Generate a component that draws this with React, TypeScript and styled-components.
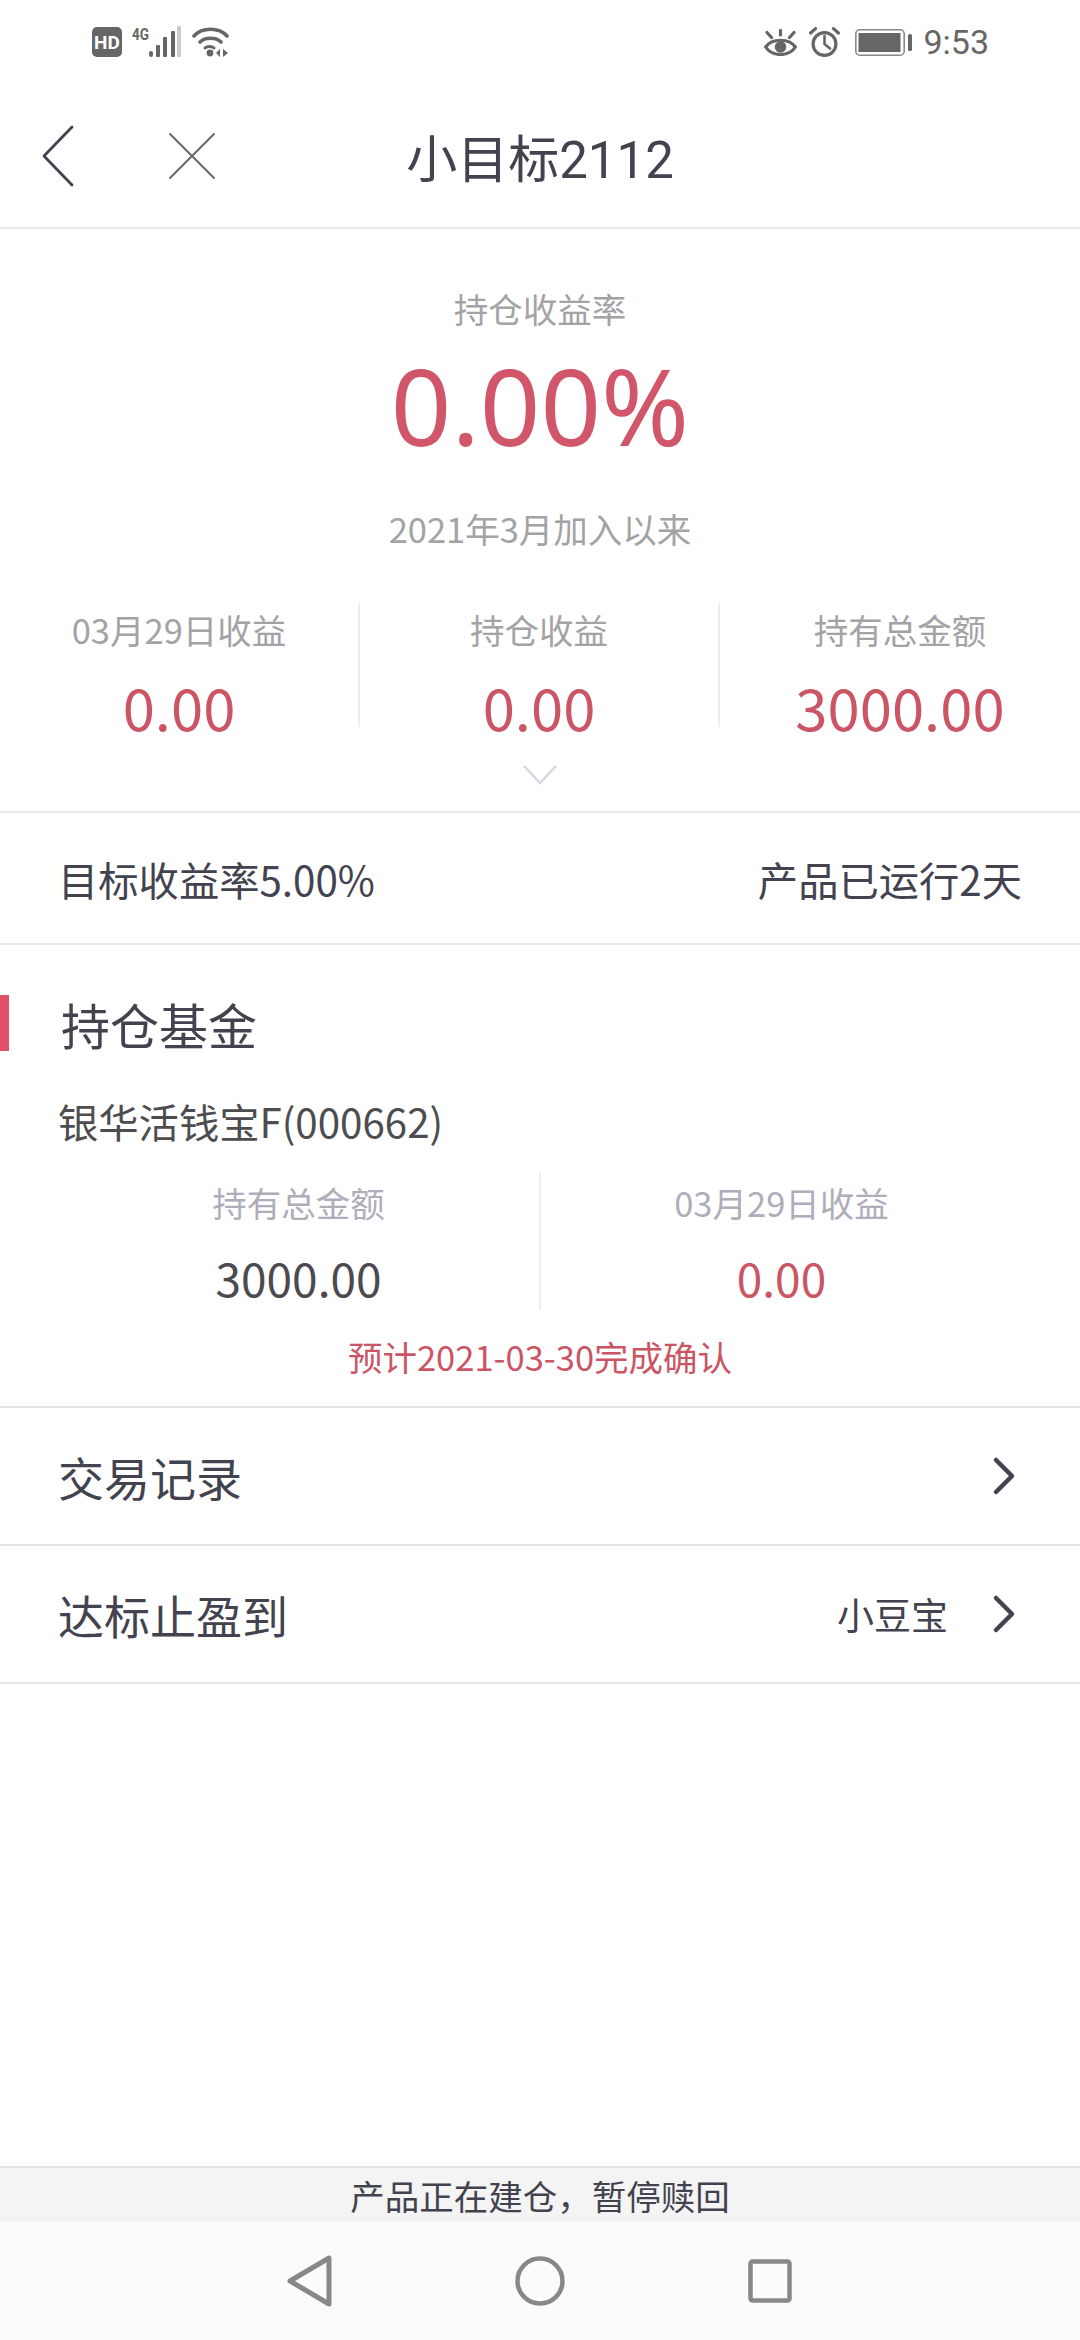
import React from "react";
import styled, { createGlobalStyle } from "styled-components";

const Global = createGlobalStyle`
  html, body { margin: 0; padding: 0; background: #fff; }
  * { box-sizing: border-box; }
`;
const FONT = `"Noto Sans CJK SC", "Noto Sans", sans-serif`;
const RED = "#cb5565";
const DARK = "#43434f";
const GREY = "#a3a3a6";
const LINE = "#e6e6e8";

const Page = styled.div`
  width: 1080px; height: 2340px; display: flex; flex-direction: column;
  background: #fff; font-family: ${FONT}; color: ${DARK}; overflow: hidden;
`;
const StatusBar = styled.div`
  height: 70px; flex: none; display: flex; align-items: center; justify-content: space-between;
  padding: 14px 91px 0 92px;
`;
const SignalGroup = styled.div`
  display: flex; align-items: flex-end; gap: 10px; margin-bottom: 6px;
`;
const SystemGroup = styled.div`
  display: flex; align-items: center; gap: 12px;
`;
const Clock = styled.span`
  font-family: Roboto, sans-serif; font-size: 34px; line-height: 40px; color: #666; margin-left: -1px;
`;
const Header = styled.header`
  height: 159px; flex: none; border-bottom: 2px solid ${LINE}; display: flex; align-items: center;
  justify-content: center; position: relative; padding-top: 14px;
`;
const Title = styled.h1`
  margin: 0; font-size: 51px; font-weight: 400; font-family: Roboto, "Noto Sans CJK SC", sans-serif; color: ${DARK};
`;
const HeaderIcons = styled.div`
  position: absolute; left: 40px; top: 14px; bottom: 0; display: flex; align-items: center; gap: 92px;
`;
const Hero = styled.section`
  display: flex; flex-direction: column; align-items: center; flex: none; height: 584px;
  border-bottom: 2px solid ${LINE}; position: relative;
`;
const HeroLabel = styled.div<{ $top: number }>`
  font-size: 34.5px; line-height: 44px; color: ${GREY}; margin-top: ${p => p.$top}px;
`;
const HeroValue = styled.div`
  font-size: 106px; line-height: 148px; color: #d2566a; font-weight: 400; margin-top: 1px;
  font-family: "Noto Sans", sans-serif;
`;
const StatsGrid = styled.div`
  display: grid; grid-template-columns: repeat(3, 1fr); width: 1080px; margin-top: 53px;
`;
const Stat = styled.div<{ $divider?: boolean }>`
  display: flex; flex-direction: column; align-items: center; height: 124px; padding-top: 1px;
  ${p => p.$divider ? `border-right: 2px solid #eeeef0;` : ""}
`;
const StatLabel = styled.div<{ $cool?: boolean }>`
  font-size: 34.5px; line-height: 50px; color: ${p => (p.$cool ? "#aeaeba" : GREY)};
`;
const StatValue = styled.div<{ $dark?: boolean; $size?: number; $gap?: number }>`
  font-size: ${p => p.$size ?? 58}px; line-height: 70px; margin-top: ${p => p.$gap ?? 17}px;
  color: ${p => (p.$dark ? "#4a4a4f" : RED)};
`;
const ExpandIcon = styled.div`
  margin-top: 37px; height: 24px; display: flex;
`;
const InfoRow = styled.div`
  height: 132px; flex: none; display: flex; align-items: center; justify-content: space-between;
  padding: 0 58px; font-size: 40.3px; border-bottom: 2px solid ${LINE}; color: ${DARK};
`;
const Fund = styled.section`
  flex: none; height: 463px; border-bottom: 2px solid ${LINE}; position: relative; display: flex; flex-direction: column;
`;
const SectionTitle = styled.h2`
  margin: 46px 0 0; padding-left: 61px; font-size: 49px; line-height: 66px; font-weight: 400; color: ${DARK}; position: relative;
  &::before { content: ""; position: absolute; left: 0; top: 4px; width: 9px; height: 56px; background: #e05067; }
`;
const FundName = styled.div`
  margin-top: 35px; padding-left: 58px; font-size: 40.3px; line-height: 58px; color: #4d4d50;
`;
const FundGrid = styled.div`
  display: grid; grid-template-columns: 541px 1fr; margin-top: 22px;
`;
const FundStat = styled.div<{ $divider?: boolean }>`
  display: flex; flex-direction: column; align-items: center; height: 138px; padding-top: 5px;
  ${p => p.$divider ? `border-right: 2px solid #eeeef0; padding-left: 58px;` : `padding-right: 58px;`}
`;
const Note = styled.div`
  text-align: center; font-size: 34.5px; line-height: 50px; color: ${RED}; margin-top: 21px;
`;
const LinkRow = styled.div`
  height: 138px; flex: none; display: flex; align-items: center; padding: 0 64px 0 58px; font-size: 46px;
  border-bottom: 2px solid ${LINE}; color: ${DARK};
`;
const LinkLabel = styled.span`
  flex: 1;
`;
const LinkValue = styled.span`
  font-size: 37px; margin-right: 44px;
`;
const Spacer = styled.div`
  flex: 1;
`;
const Banner = styled.div`
  height: 56px; flex: none; background: #f4f4f5; border-top: 2px solid #e6e6e8; display: flex; align-items: center;
  justify-content: center; font-size: 34.5px; color: ${DARK}; line-height: 54px;
`;
const NavBar = styled.nav`
  height: 118px; flex: none; background: #fbfbfb; display: flex; align-items: center; justify-content: center;
`;
const NavSlot = styled.div`
  width: 230px; display: flex; justify-content: center;
`;

const G = "#666";
const Chevron = () => (
  <svg width="24" height="40" viewBox="0 0 24 40" fill="none" stroke={DARK} strokeWidth="4.5" strokeLinecap="round" strokeLinejoin="round"><path d="M4 4 L20 20 L4 36" /></svg>
);

export default function App() {
  return (
    <Page>
      <Global />
      <StatusBar>
        <SignalGroup>
          <svg width="30" height="30" viewBox="0 0 30 30"><rect x="0" y="0" width="30" height="30" rx="5" fill={G} /><text x="15" y="22" textAnchor="middle" fontSize="19" fontWeight="700" fontFamily="Roboto, sans-serif" fill="#fff">HD</text></svg>
          <svg width="50" height="36" viewBox="0 0 50 36" fill={G}>
            <text x="0" y="19" fontSize="17" fontWeight="700" fontFamily="Roboto, sans-serif" textLength="17" lengthAdjust="spacingAndGlyphs">4G</text>
            <rect x="17" y="30" width="4" height="6" rx="2" />
            <rect x="24" y="24" width="4" height="12" rx="1" />
            <rect x="31" y="16" width="4" height="20" rx="1" />
            <rect x="39" y="10" width="4" height="26" rx="1" />
            <rect x="45" y="5" width="4" height="31" rx="1" fill="#ccc" />
          </svg>
          <svg width="37" height="30" viewBox="0 0 37 30" fill="none" stroke={G} strokeWidth="3.6" strokeLinecap="round">
            <path d="M2 9 C10 0 27 0 35 9" />
            <path d="M8 15 C13 10 24 10 29 15" />
            <path d="M13 21 C15 19 20 19 22 21" strokeWidth="3" />
            <circle cx="18" cy="26" r="3.4" fill={G} stroke="none" />
            <path d="M28 22 L24 26 L28 30 Z M31 22 L36 26 L31 30 Z" fill={G} stroke="none" />
          </svg>
        </SignalGroup>
        <SystemGroup>
          <svg width="33" height="27" viewBox="0 0 33 27" fill="none" stroke={G} strokeWidth="3.2" strokeLinecap="round">
            <path d="M1.6 18 C8 9 25 9 31.4 18 C25 28 8 28 1.6 18 Z" />
            <circle cx="16.5" cy="18" r="5.8" fill={G} stroke="none" />
            <path d="M16.5 1.5 V6 M3 3.5 L7.5 8.5 M30 3.5 L25.5 8.5" />
          </svg>
          <svg width="34" height="30" viewBox="0 0 34 30" fill="none" stroke={G} strokeWidth="3.2" strokeLinecap="round">
            <circle cx="15.5" cy="17" r="11.4" />
            <path d="M15.5 9 V17 L21 21.5" strokeWidth="2.6" />
            <path d="M1.6 6 L6.5 1.6 M29.4 6 L24.5 1.6" />
          </svg>
          <svg width="57" height="27" viewBox="0 0 57 27" fill="none">
            <rect x="0.8" y="0.8" width="48.4" height="25.4" rx="4" stroke="#888" strokeWidth="1.6" />
            <rect x="3.5" y="4" width="42" height="19" fill={G} />
            <rect x="53" y="5" width="4" height="17" rx="1.5" fill={G} />
          </svg>
          <Clock>9:53</Clock>
        </SystemGroup>
      </StatusBar>

      <Header>
        <HeaderIcons>
          <svg width="36" height="62" viewBox="0 0 36 62" fill="none" stroke={DARK} strokeWidth="2.8" strokeLinecap="round" strokeLinejoin="round"><path d="M32 2 L4 31 L32 60" /></svg>
          <svg width="48" height="48" viewBox="0 0 48 48" fill="none" stroke="#66666f" strokeWidth="2" strokeLinecap="round"><path d="M2 2 L46 46 M46 2 L2 46" /></svg>
        </HeaderIcons>
        <Title>小目标2112</Title>
      </Header>

      <Hero>
        <HeroLabel $top={57}>持仓收益率</HeroLabel>
        <HeroValue>0.00%</HeroValue>
        <HeroLabel $top={27}>2021年3月加入以来</HeroLabel>
        <StatsGrid>
          <Stat $divider><StatLabel>03月29日收益</StatLabel><StatValue>0.00</StatValue></Stat>
          <Stat $divider><StatLabel>持仓收益</StatLabel><StatValue>0.00</StatValue></Stat>
          <Stat><StatLabel>持有总金额</StatLabel><StatValue>3000.00</StatValue></Stat>
        </StatsGrid>
        <ExpandIcon>
          <svg width="36" height="22" viewBox="0 0 36 22" fill="none" stroke="#d4d6e0" strokeWidth="2.4"><path d="M2 2 L18 19 L34 2" /></svg>
        </ExpandIcon>
      </Hero>

      <InfoRow><span>目标收益率5.00%</span><span>产品已运行2天</span></InfoRow>

      <Fund>
        <SectionTitle>持仓基金</SectionTitle>
        <FundName>银华活钱宝F(000662)</FundName>
        <FundGrid>
          <FundStat $divider><StatLabel $cool>持有总金额</StatLabel><StatValue $dark $size={46} $gap={15}>3000.00</StatValue></FundStat>
          <FundStat><StatLabel $cool>03月29日收益</StatLabel><StatValue $size={46} $gap={15}>0.00</StatValue></FundStat>
        </FundGrid>
        <Note>预计2021-03-30完成确认</Note>
      </Fund>

      <LinkRow><LinkLabel>交易记录</LinkLabel><Chevron /></LinkRow>
      <LinkRow><LinkLabel>达标止盈到</LinkLabel><LinkValue>小豆宝</LinkValue><Chevron /></LinkRow>

      <Spacer />
      <Banner>产品正在建仓，暂停赎回</Banner>
      <NavBar>
        <NavSlot>
          <svg width="46" height="52" viewBox="0 0 46 52" fill="none" stroke="#888" strokeWidth="5" strokeLinejoin="round"><path d="M42 3 V49 L3 26 Z" /></svg>
        </NavSlot>
        <NavSlot>
          <svg width="50" height="50" viewBox="0 0 50 50" fill="none" stroke="#888" strokeWidth="4.5"><circle cx="25" cy="25" r="22.5" /></svg>
        </NavSlot>
        <NavSlot>
          <svg width="44" height="44" viewBox="0 0 44 44" fill="none" stroke="#888" strokeWidth="4.5" strokeLinejoin="round"><rect x="2.5" y="2.5" width="39" height="39" rx="2" /></svg>
        </NavSlot>
      </NavBar>
    </Page>
  );
}
